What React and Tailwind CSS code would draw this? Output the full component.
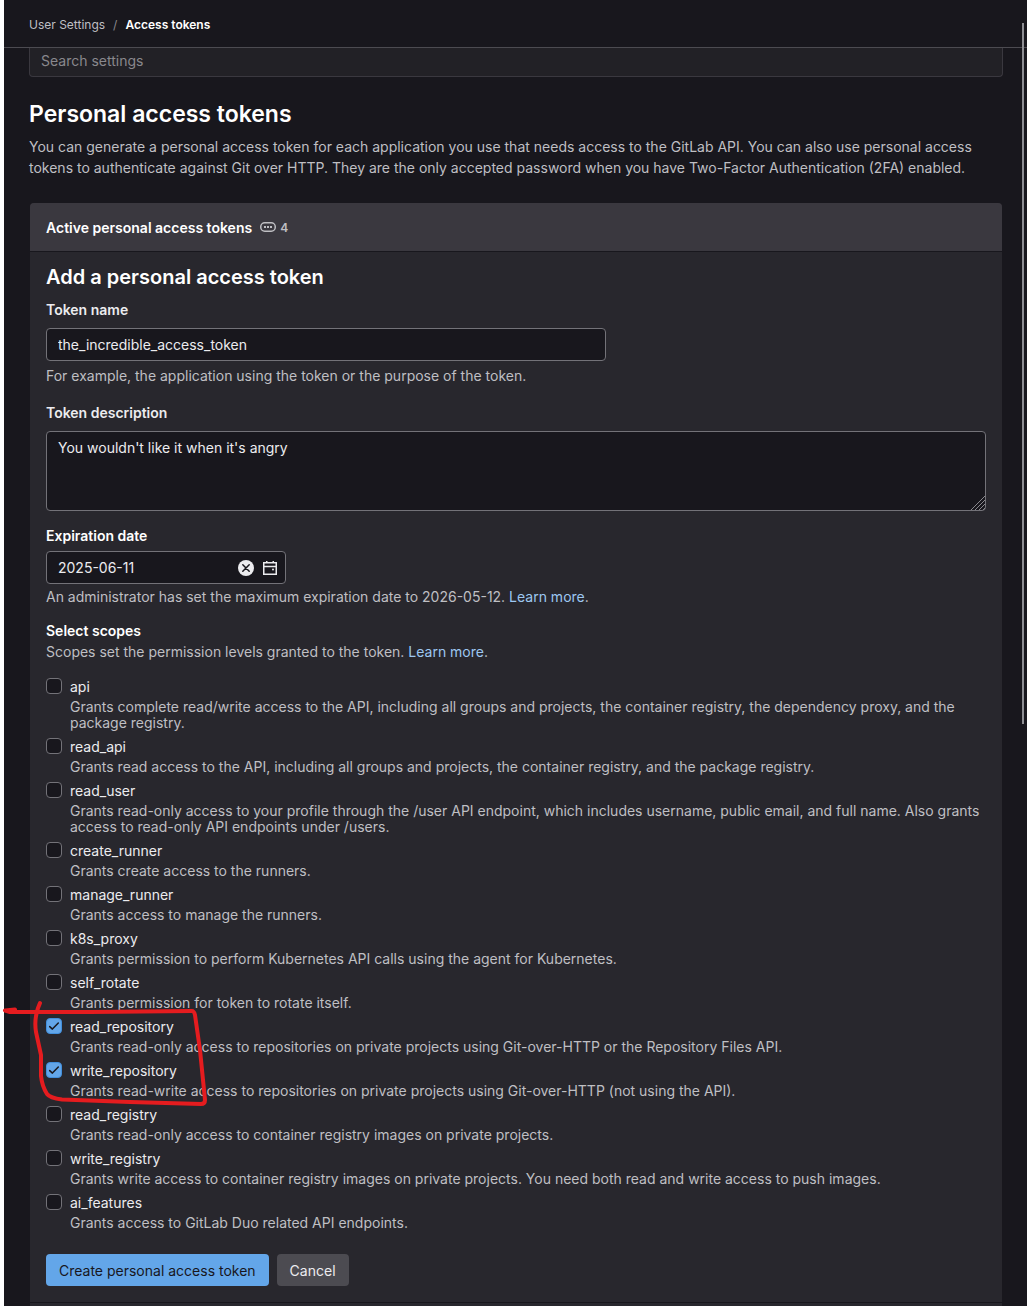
import React from "react";

const scopes = [
  ["api", "Grants complete read/write access to the API, including all groups and projects, the container registry, the dependency proxy, and the package registry."],
  ["read_api", "Grants read access to the API, including all groups and projects, the container registry, and the package registry."],
  ["read_user", "Grants read-only access to your profile through the /user API endpoint, which includes username, public email, and full name. Also grants access to read-only API endpoints under /users."],
  ["create_runner", "Grants create access to the runners."],
  ["manage_runner", "Grants access to manage the runners."],
  ["k8s_proxy", "Grants permission to perform Kubernetes API calls using the agent for Kubernetes."],
  ["self_rotate", "Grants permission for token to rotate itself."],
  ["read_repository", "Grants read-only access to repositories on private projects using Git-over-HTTP or the Repository Files API.", true],
  ["write_repository", "Grants read-write access to repositories on private projects using Git-over-HTTP (not using the API).", true],
  ["read_registry", "Grants read-only access to container registry images on private projects."],
  ["write_registry", "Grants write access to container registry images on private projects. You need both read and write access to push images."],
  ["ai_features", "Grants access to GitLab Duo related API endpoints."],
];

function Scope({ name, text, checked }) {
  return (
    <li className="flex gap-2 pb-1.5">
      <span className="relative mt-px h-4 w-4 shrink-0">
        <input
          id={name}
          type="checkbox"
          defaultChecked={checked}
          aria-describedby={name + "-help"}
          className="peer block h-4 w-4 appearance-none rounded border border-[#737278] bg-[#18171d] checked:border-[#428fdc] checked:bg-[#63a6e9]"
        />
        <svg viewBox="0 0 16 16" className="pointer-events-none absolute inset-0 hidden h-4 w-4 peer-checked:block" fill="none" stroke="#18171d" strokeWidth="1.5" strokeLinecap="round" strokeLinejoin="round">
          <path d="M3.7 8.6 6.4 11.1 12.3 5" />
        </svg>
      </span>
      <div className="min-w-0">
        <label htmlFor={name} className="block leading-5 text-[#ececef]">{name}</label>
        <p id={name + "-help"} className="mt-0.5 leading-4 text-[#bfbfc3]">{text}</p>
      </div>
    </li>
  );
}

export default function App() {
  return (
    <div className="relative flex min-h-screen flex-col border-l-4 border-white bg-[#18171d] font-['Inter',sans-serif] text-sm text-[#ececef]">
      <header className="flex h-12 items-center border-b border-[#4c4b51] px-[25px] pt-0.5">
        <nav aria-label="Breadcrumb" className="flex items-center text-xs">
          <a href="#" className="text-[#bfbfc3]">User Settings</a>
          <span className="px-2 text-[#89888d]">/</span>
          <a href="#" className="font-semibold text-white">Access tokens</a>
        </nav>
      </header>

      <main className="flex flex-1 flex-col pr-6 pl-[25px]">
        <input
          type="search"
          aria-label="Search settings"
          placeholder="Search settings"
          className="h-[29px] w-full rounded-b border border-t-0 border-[#3a383f] bg-[#222126] px-[11px] pb-1 placeholder:text-[#89888d]"
        />
        <h1 className="mt-[21px] text-[23px] leading-8 font-semibold text-white">Personal access tokens</h1>
        <p className="mt-1.5 leading-[21px] text-[#bfbfc3]">
          You can generate a personal access token for each application you use that needs access to the GitLab API. You can also use personal access tokens to authenticate against Git over HTTP. They are the only accepted password when you have Two-Factor Authentication (2FA) enabled.
        </p>

        <section className="mx-px mt-[25px] flex flex-1 flex-col rounded-t bg-[#28272d]">
          <div className="flex h-[49px] items-center rounded-t border-b border-[#18171d] bg-[#3a383f] px-4 pt-0.5">
            <h2 className="font-semibold text-white">Active personal access tokens</h2>
            <svg viewBox="0 0 16 16" className="mr-1 ml-2 h-4 w-4" fill="none" stroke="#bfbfc3" strokeWidth="1.5">
              <rect x="0.75" y="2.75" width="14.5" height="8.5" rx="4" />
              <path d="M4 7h2M7 7h2M10 7h2" strokeWidth="2" />
            </svg>
            <span className="text-xs font-semibold text-[#bfbfc3]">4</span>
          </div>

          <form className="px-4 pb-4" onSubmit={(e) => e.preventDefault()}>
            <h3 className="mt-[9px] text-xl leading-8 font-semibold text-white">Add a personal access token</h3>

            <label htmlFor="token-name" className="mt-[7px] block leading-5 font-semibold">Token name</label>
            <input id="token-name" defaultValue="the_incredible_access_token" className="mt-2 block h-[33px] w-full max-w-[560px] rounded border border-[#737278] bg-[#18171d] px-[11px]" />
            <p className="mt-[5px] leading-5 text-[#bfbfc3]">For example, the application using the token or the purpose of the token.</p>

            <label htmlFor="token-description" className="mt-[17px] block leading-5 font-semibold">Token description</label>
            <div className="relative mt-2">
              <textarea id="token-description" defaultValue="You wouldn't like it when it's angry" className="block h-20 w-full resize-none rounded border border-[#737278] bg-[#18171d] px-[11px] py-1.5 leading-5" />
              <svg viewBox="0 0 14 14" className="pointer-events-none absolute right-px bottom-px h-3.5 w-3.5" stroke="#89888d" strokeWidth="1">
                <path d="M0 14 14 0M4 14 14 4M8 14l6-6M12 14l2-2" />
              </svg>
            </div>

            <label htmlFor="expiration" className="mt-[15px] block leading-5 font-semibold text-white">Expiration date</label>
            <div className="mt-[5px] flex h-[33px] w-60 items-center rounded border border-[#737278] bg-[#18171d] px-[7px]">
              <input id="expiration" defaultValue="2025-06-11" className="min-w-0 flex-1 bg-transparent px-1" />
              <button type="button" aria-label="Clear date" className="mr-2">
                <svg viewBox="0 0 16 16" className="block h-4 w-4">
                  <circle cx="8" cy="8" r="8" fill="#ececef" />
                  <path d="m4.8 4.8 6.4 6.4m0-6.4-6.4 6.4" stroke="#18171d" strokeWidth="1.5" strokeLinecap="round" />
                </svg>
              </button>
              <button type="button" aria-label="Open calendar">
                <svg viewBox="0 0 16 16" className="block h-4 w-4" fill="none" stroke="#ececef" strokeWidth="1.5">
                  <path d="M1.75 2.75h12.5v11.5H1.75zM1.75 6.5h12.5M4.75 1v2M11.25 1v2" />
                  <circle cx="11" cy="9.5" r="1" fill="#ececef" stroke="none" />
                </svg>
              </button>
            </div>
            <p className="mt-[3px] leading-5 text-[#bfbfc3]">
              An administrator has set the maximum expiration date to 2026-05-12. <a href="#" className="text-[#9dc7f1]">Learn more</a>.
            </p>

            <fieldset className="mt-3.5">
              <legend className="leading-5 font-semibold text-white">Select scopes</legend>
              <p className="leading-[21px] text-[#bfbfc3]">
                Scopes set the permission levels granted to the token. <a href="#" className="text-[#9dc7f1]">Learn more</a>.
              </p>
              <ul className="mt-[15px]">
                {scopes.map(([name, text, checked]) => (
                  <Scope key={name} name={name} text={text} checked={checked} />
                ))}
              </ul>
            </fieldset>

            <div className="mt-[17px] flex gap-2">
              <button type="submit" className="h-8 rounded bg-[#63a6e9] px-[13px] pt-0.5 text-[#18171d]">Create personal access token</button>
              <button type="button" className="h-8 rounded bg-[#4c4b51] px-[13px] pt-0.5 text-[#ececef]">Cancel</button>
            </div>
          </form>
          <div className="flex-1 border-t border-[#18171d]" />
        </section>
      </main>

      <div className="absolute top-[23px] right-[3px] h-[701px] w-0.5 bg-[#8f8f94]" />

      <svg viewBox="0 0 210 110" className="pointer-events-none absolute top-[1000px] -left-1 h-[110px] w-[210px]" fill="none" stroke="#e51c1f" strokeWidth="4" strokeLinecap="round" strokeLinejoin="round">
        <path d="M15 9.5 5 10.5 10 12 90 12 192 11Q194 11 195 15L200 50 205 100Q205 104 201 104L130 102 62 99.500Q50 98 47 94 42 86 41 76L41 55 36 32Q34 20 38 8L40 3" />
      </svg>
    </div>
  );
}
